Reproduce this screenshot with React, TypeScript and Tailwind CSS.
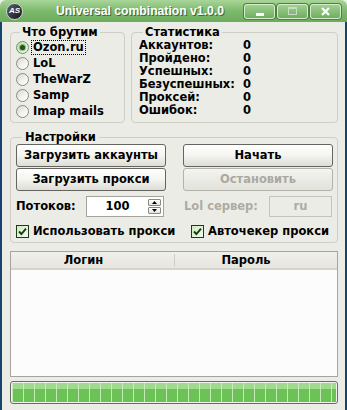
import React from "react";

const targets = ["Ozon.ru", "LoL", "TheWarZ", "Samp", "Imap mails"];
const stats = ["Аккаунтов:", "Пройдено:", "Успешных:", "Безуспешных:", "Проксей:", "Ошибок:"];

function Radio({ checked }: { checked?: boolean }) {
  if (checked) {
    return (
      <span className="w-[13px] h-[13px] rounded-full border border-[#6e8f64] bg-gradient-to-br from-[#b9e0a9] to-[#f3fbef] flex items-center justify-center shrink-0">
        <span className="w-[5px] h-[5px] rounded-full bg-[#2e4a28] shadow-[0_0_0_1px_#7fbf6c]" />
      </span>
    );
  }
  return (
    <span className="w-[13px] h-[13px] rounded-full border border-[#8b8b82] bg-gradient-to-br from-[#d6d6ce] via-[#f0f0ec] to-white shrink-0" />
  );
}

function Check() {
  return (
    <span className="w-[13px] h-[13px] border border-[#1e3a19] bg-gradient-to-br from-[#cfe9c3] to-[#f4fbf1] flex items-center justify-center shrink-0">
      <svg width="9" height="9" viewBox="0 0 9 9">
        <path d="M1 4.5 L3.4 7 L8 1.6" stroke="#163f0f" strokeWidth="1.9" fill="none" />
      </svg>
    </span>
  );
}

function Btn({ label, disabled }: { label: string; disabled?: boolean }) {
  return (
    <div
      className={
        disabled
          ? "h-[23px] rounded-[3px] border border-[#b3b3aa] bg-gradient-to-b from-[#f4f4f0] to-[#e2e2dc] flex items-center justify-center text-[#a9a9a1]"
          : "h-[23px] rounded-[3px] border border-[#646460] bg-gradient-to-b from-white via-[#f4f4f0] to-[#deded6] flex items-center justify-center text-black"
      }
    >
      {label}
    </div>
  );
}

function TitleButton({ children }: { children: React.ReactNode }) {
  return (
    <div className="w-[31px] h-[15px] rounded-[3px] border border-[#d4ecca] shadow-[0_0_0_1px_#4f7f45] bg-gradient-to-b from-[#9fd08f] to-[#6fae60] flex items-center justify-center">
      {children}
    </div>
  );
}

export default function App() {
  return (
    <div className="w-[347px] h-[410px] flex flex-col overflow-hidden bg-[#e9f2e6] font-['DejaVu_Sans',sans-serif] text-[11.5px] font-bold leading-[13px] text-black">
      {/* title bar */}
      <div className="h-[22px] shrink-0 rounded-t-[6px] bg-gradient-to-b from-[#a8d698] via-[#7cb96c] to-[#6dab5e] flex items-center pl-[6px] pr-[6px]">
        <div className="w-[17px] h-[17px] rounded-full bg-gradient-to-br from-[#5b6170] to-[#14161c] border border-[#c9d9c3] flex items-center justify-center">
          <span className="text-white text-[8px] leading-none font-['Liberation_Sans',sans-serif] italic">AS</span>
        </div>
        <span className="ml-[33px] text-white font-['Liberation_Sans',sans-serif] text-[12.2px] [text-shadow:1px_1px_0_#3d6a33]">
          Universal combination v1.0.0
        </span>
        <div className="ml-auto flex gap-[2px]">
          <TitleButton>
            <span className="mt-[6px] w-[8px] h-[3px] bg-white" />
          </TitleButton>
          <TitleButton>
            <span className="w-[9px] h-[8px] border border-[#c7dcc1] border-t-2" />
          </TitleButton>
          <TitleButton>
            <svg width="9" height="9" viewBox="0 0 9 9">
              <path d="M1 1 L8 8 M8 1 L1 8" stroke="white" strokeWidth="2.2" />
            </svg>
          </TitleButton>
        </div>
      </div>

      {/* body */}
      <div className="flex-1 flex flex-col bg-[#ecece7] border-x-2 border-[#16446c] pl-[8px] pr-[7px] pt-[4px] pb-[6px]">
        <div className="flex gap-[6px]">
          <fieldset className="w-[115px] h-[97px] rounded-[4px] border border-[#cfcfc5] pl-[5px]">
            <legend className="ml-[4px] px-[2px] leading-[13px]">Что брутим</legend>
            {targets.map((t, i) => (
              <div key={t} className="h-[16px] flex items-center gap-[2px]">
                <Radio checked={i === 0} />
                <span className={i === 0 ? "border border-dotted border-black px-[1px] leading-[13px]" : "px-[2px]"}>{t}</span>
              </div>
            ))}
          </fieldset>
          <fieldset className="flex-1 h-[97px] rounded-[4px] border border-[#cfcfc5] pl-[7px]">
            <legend className="ml-[4px] px-[2px] leading-[13px]">Статистика</legend>
            {stats.map((s) => (
              <div key={s} className="h-[13px] flex items-center">
                <span className="w-[104px] whitespace-nowrap">{s}</span>
                <span>0</span>
              </div>
            ))}
          </fieldset>
        </div>

        <fieldset className="mt-[8px] rounded-[4px] border border-[#cfcfc5] pl-[5px] pr-[4px] pb-[4px]">
          <legend className="ml-[6px] px-[3px] leading-[13px]">Настройки</legend>
          <div className="grid grid-cols-[150px_150px] gap-x-[17px] gap-y-[1px]">
            <Btn label="Загрузить аккаунты" />
            <Btn label="Начать" />
            <Btn label="Загрузить прокси" />
            <Btn label="Остановить" disabled />
          </div>
          <div className="mt-[5px] grid grid-cols-[150px_150px] gap-x-[17px]">
            <div className="flex items-center">
              <span className="w-[70px]">Потоков:</span>
              <div className="w-[78px] h-[21px] border border-[#a3a39b] bg-white flex items-center pr-[2px]">
                <span className="flex-1 text-center">100</span>
                <div className="flex flex-col gap-[1px]">
                  <div className="w-[13px] h-[7px] border border-[#8a8a84] rounded-[1px] bg-gradient-to-b from-white to-[#e3e3dd] flex items-center justify-center">
                    <svg width="5" height="3" viewBox="0 0 5 3"><path d="M2.5 0 L5 3 L0 3 Z" fill="black" /></svg>
                  </div>
                  <div className="w-[13px] h-[7px] border border-[#8a8a84] rounded-[1px] bg-gradient-to-b from-white to-[#e3e3dd] flex items-center justify-center">
                    <svg width="5" height="3" viewBox="0 0 5 3"><path d="M0 0 L5 0 L2.5 3 Z" fill="black" /></svg>
                  </div>
                </div>
              </div>
            </div>
            <div className="flex items-center justify-between pl-[1px] pr-[1px]">
              <span className="text-[#acaca4]">Lol сервер:</span>
              <div className="w-[63px] h-[21px] border border-[#c4c4bc] bg-[#ecece7] flex items-center justify-center text-[#acaca4]">
                ru
              </div>
            </div>
          </div>
          <div className="mt-[7px] h-[14px] grid grid-cols-[150px_150px] gap-x-[17px]">
            <div className="flex items-center gap-[4px]">
              <Check />
              <span className="whitespace-nowrap">Использовать прокси</span>
            </div>
            <div className="flex items-center gap-[4px] pl-[8px]">
              <Check />
              <span className="whitespace-nowrap">Авточекер прокси</span>
            </div>
          </div>
        </fieldset>

        {/* list */}
        <div className="mt-[8px] flex-1 border border-[#a4a4a0] bg-[#fcfcfc] flex flex-col">
          <div className="h-[18px] flex items-center bg-gradient-to-b from-[#f0efea] to-[#e6e5df] border-b-2 border-[#d6d3ca]">
            <span className="w-[163px] text-center pr-[18px]">Логин</span>
            <span className="w-[1px] h-[12px] bg-[#cfccc2]" />
            <span className="flex-1 text-center pr-[20px]">Пароль</span>
          </div>
        </div>

        {/* progress */}
        <div className="mt-[4px] h-[23px] rounded-[3px] border border-[#6a6a68] bg-[#f2f2ee] p-[1px] shrink-0">
          <div className="h-full flex gap-[1px] bg-[#c4eab7] overflow-hidden pl-[1px]">
            {Array.from({ length: 31 }).map((_, i) => (
              <div
                key={i}
                className="w-[10px] shrink-0 h-full bg-[linear-gradient(to_bottom,#a2d990_0%,#a2d990_33%,#6cc256_33%,#6cc256_100%)]"
              />
            ))}
          </div>
        </div>
      </div>
    </div>
  );
}
